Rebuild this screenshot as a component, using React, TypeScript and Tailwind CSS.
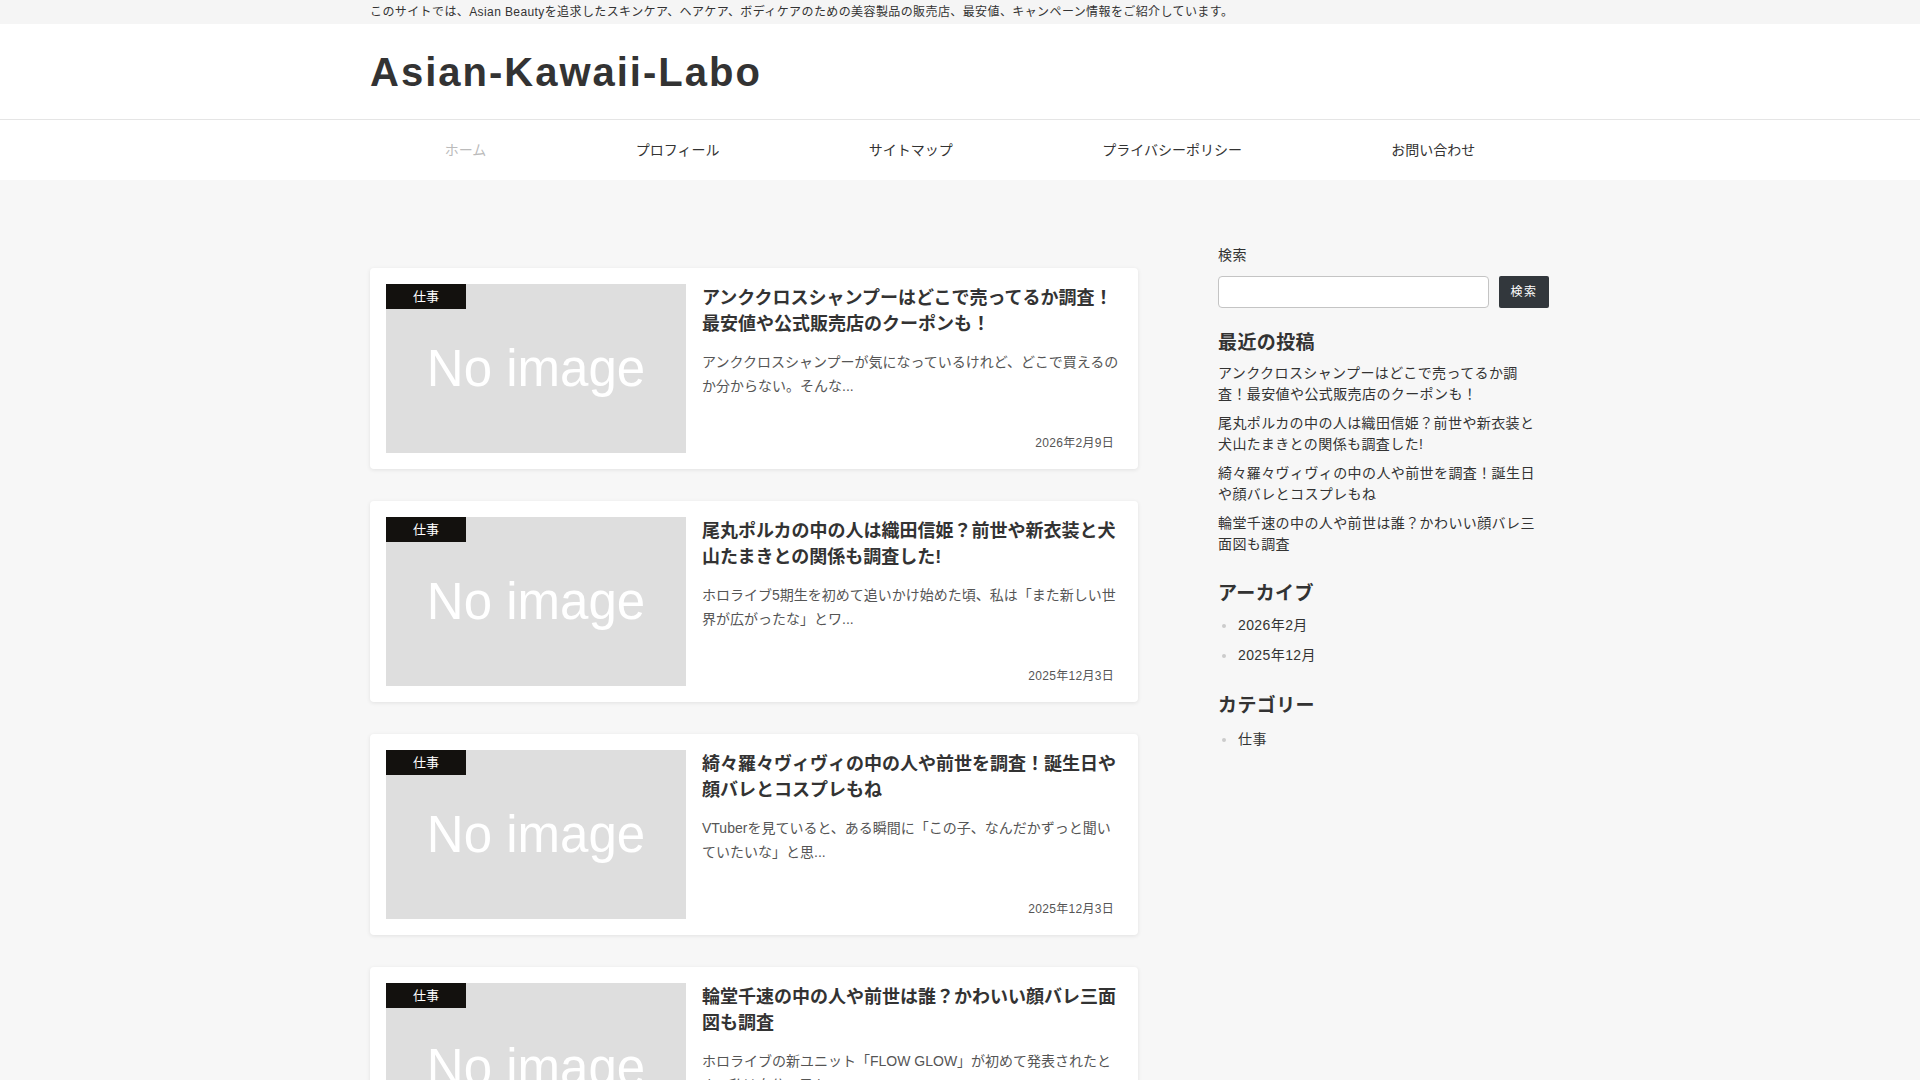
import React from "react";

const font = { fontFamily: '"Liberation Sans", "Noto Sans CJK JP", Arial, sans-serif' };

type Post = { title: string[]; snippet: string[]; date: string };

const posts: Post[] = [
  {
    title: ["アンククロスシャンプーはどこで売ってるか調査！", "最安値や公式販売店のクーポンも！"],
    snippet: ["アンククロスシャンプーが気になっているけれど、どこで買えるの", "か分からない。そんな..."],
    date: "2026年2月9日",
  },
  {
    title: ["尾丸ポルカの中の人は織田信姫？前世や新衣装と犬", "山たまきとの関係も調査した!"],
    snippet: ["ホロライブ5期生を初めて追いかけ始めた頃、私は「また新しい世", "界が広がったな」とワ..."],
    date: "2025年12月3日",
  },
  {
    title: ["綺々羅々ヴィヴィの中の人や前世を調査！誕生日や", "顔バレとコスプレもね"],
    snippet: ["VTuberを見ていると、ある瞬間に「この子、なんだかずっと聞い", "ていたいな」と思..."],
    date: "2025年12月3日",
  },
  {
    title: ["輪堂千速の中の人や前世は誰？かわいい顔バレ三面", "図も調査"],
    snippet: ["ホロライブの新ユニット「FLOW GLOW」が初めて発表されたと", "き、私は自分の目を..."],
    date: "2025年12月3日",
  },
];

const recent: string[][] = [
  ["アンククロスシャンプーはどこで売ってるか調", "査！最安値や公式販売店のクーポンも！"],
  ["尾丸ポルカの中の人は織田信姫？前世や新衣装と", "犬山たまきとの関係も調査した!"],
  ["綺々羅々ヴィヴィの中の人や前世を調査！誕生日", "や顔バレとコスプレもね"],
  ["輪堂千速の中の人や前世は誰？かわいい顔バレ三", "面図も調査"],
];

const nav = ["ホーム", "プロフィール", "サイトマップ", "プライバシーポリシー", "お問い合わせ"];

function Card({ p }: { p: Post }) {
  return (
    <div className="flex bg-white rounded-[4px] shadow-[0_1px_4px_rgba(0,0,0,0.09)] pl-4 pr-3 py-4">
      <div className="relative w-[300px] h-[169px] shrink-0 bg-[#dedede] flex items-center justify-center">
        <span className="text-white text-[51px] leading-none" style={{ fontFamily: '"Liberation Sans", Arial, sans-serif' }}>
          No image
        </span>
        <div className="absolute left-0 top-0 w-[80px] h-[25px] bg-[#13110e] text-white text-[13px] flex items-center justify-center">
          仕事
        </div>
      </div>
      <div className="ml-4 flex-1 flex flex-col min-w-0">
        <div className="mt-[1px] text-[18px] leading-[26px] font-bold text-[#333] whitespace-nowrap">
          {p.title.map((t, i) => (
            <div key={i}>{t}</div>
          ))}
        </div>
        <div className="mt-[14px] text-[14px] leading-[23.5px] text-[#555] whitespace-nowrap">
          {p.snippet.map((t, i) => (
            <div key={i}>{t}</div>
          ))}
        </div>
        <div className="mt-auto mb-[1px] text-right text-[12px] leading-[18px] text-[#555] pr-3 tracking-[0.3px]">{p.date}</div>
      </div>
    </div>
  );
}

export default function App() {
  return (
    <div className="min-h-screen bg-[#f7f7f7] text-[#333]" style={font}>
      <div className="h-[24px] bg-[#f5f5f5]">
        <div className="w-[1180px] mx-auto text-[12px] leading-[24px] tracking-[0.4px] text-[#333]">
          このサイトでは、Asian Beautyを追求したスキンケア、ヘアケア、ボディケアのための美容製品の販売店、最安値、キャンペーン情報をご紹介しています。
        </div>
      </div>
      <div className="bg-white h-[96px] border-b border-[#e5e5e5]">
        <div className="w-[1180px] mx-auto h-full flex items-center">
          <div className="text-[40px] font-bold tracking-[2px] text-[#333] leading-none" style={{ fontFamily: '"Liberation Sans", Arial, sans-serif' }}>
            Asian-Kawaii-Labo
          </div>
        </div>
      </div>
      <div className="bg-white h-[60px]">
        <div className="w-[1180px] mx-auto flex h-full">
          {nav.map((n, i) => (
            <div
              key={n}
              className={`flex-auto text-center text-[14px] leading-[60px] ${i === 0 ? "text-[#bbb]" : "text-[#333]"}`}
            >
              {n}
            </div>
          ))}
        </div>
      </div>

      <div className="w-[1180px] mx-auto flex gap-[80px] pt-[65px] pb-10">
        <div className="w-[768px] shrink-0 mt-[23px] flex flex-col gap-[32px]">
          {posts.map((p, i) => (
            <Card key={i} p={p} />
          ))}
        </div>

        <div className="w-[332px] shrink-0 tracking-[0.4px]">
          <div className="text-[14px] leading-[21px]">検索</div>
          <div className="mt-[10px] flex gap-[10px]">
            <div className="w-[271px] h-[32px] bg-white border border-[#c4c4c4] rounded-[4px]"></div>
            <div className="w-[50px] h-[32px] bg-[#32373c] rounded-[2px] text-white text-[12px] tracking-[1.5px] flex items-center justify-center">
              検索
            </div>
          </div>

          <div className="mt-[22px] text-[19px] leading-[26px] font-bold">最近の投稿</div>
          <div className="mt-[7px] flex flex-col gap-[8px] text-[14px] leading-[21px] whitespace-nowrap">
            {recent.map((r, i) => (
              <div key={i}>
                {r.map((l, j) => (
                  <div key={j}>{l}</div>
                ))}
              </div>
            ))}
          </div>

          <div className="mt-[26px] text-[19px] leading-[26px] font-bold">アーカイブ</div>
          <div className="mt-[8px] flex flex-col gap-[9px] text-[14px] leading-[21px]">
            {["2026年2月", "2025年12月"].map((a) => (
              <div key={a} className="flex items-center">
                <span className="w-[4px] h-[4px] rounded-full bg-[#ccc] ml-[4px] mr-[12px]"></span>
                <span>{a}</span>
              </div>
            ))}
          </div>

          <div className="mt-[27px] text-[19px] leading-[26px] font-bold">カテゴリー</div>
          <div className="mt-[10px] flex flex-col text-[14px] leading-[21px]">
            <div className="flex items-center">
              <span className="w-[4px] h-[4px] rounded-full bg-[#ccc] ml-[4px] mr-[12px]"></span>
              <span>仕事</span>
            </div>
          </div>
        </div>
      </div>
    </div>
  );
}
